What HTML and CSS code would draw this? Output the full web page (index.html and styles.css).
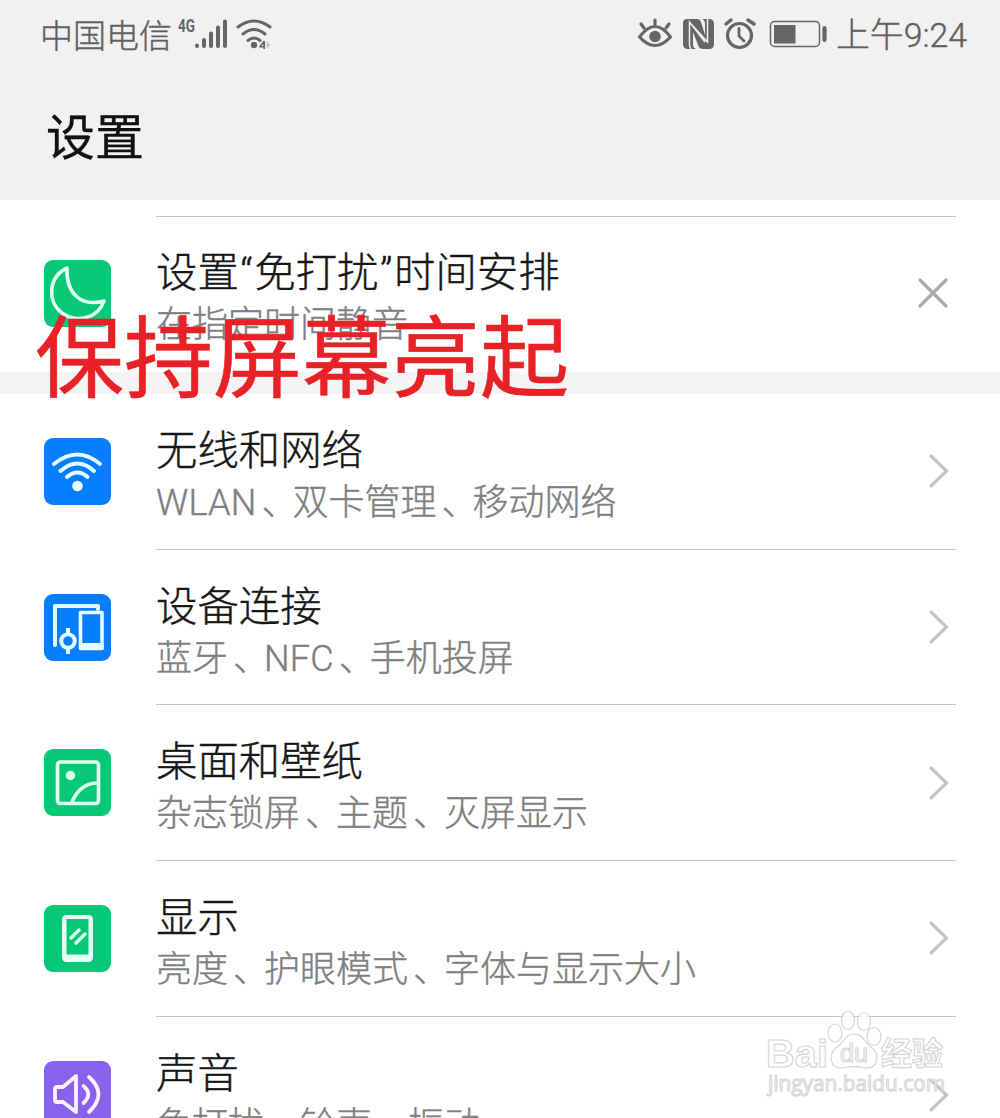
FILE: index.html
```html
<!DOCTYPE html>
<html lang="zh-CN">
<head>
<meta charset="utf-8">
<title>设置</title>
<link rel="stylesheet" href="styles.css">
</head>
<body>
<div class="screen">
  <header class="header">
    <div class="status">
      <span class="carrier">中国电信</span>
      <svg class="signal" width="98" height="36" viewBox="0 0 98 36">
        <text class="net" x="1" y="15" textLength="17" lengthAdjust="spacingAndGlyphs">4G</text>
        <g class="bars"><path d="M20 28.500v.5M27 23v6M34 16.500v12.500M41 10.500v18.500M48 4.500v24.500"/></g>
        <g class="waves"><path d="M61 10Q77-2 93 10M66 17Q77 8 88 17M71 23.500Q77 18.500 83 23.500"/></g>
        <circle cx="77" cy="28" r="3.200" fill="#666"/>
        <path d="M86.300 24v8h1.700v-8zM86.300 24l-4 5v1.500h5V29h-3l3-3z" fill="#666"/>
        <path d="M89.500 24l4 4-4 4z" fill="#c4c4c4"/>
      </svg>
      <span class="spacer"></span>
      <svg class="indicators" width="190" height="36" viewBox="0 0 190 36">
        <g fill="none" stroke="#666" stroke-width="3.200" stroke-linecap="round">
          <path d="M2.500 20Q18-1 33.500 20Q18 37 2.500 20z" stroke-linejoin="round"/>
          <path d="M18 7V3M7 11L4 7M29 11L32 7"/>
        </g>
        <circle cx="18" cy="19.500" r="5.800" fill="#666"/>
        <path d="M50 2H60Q63 2 64 5L68 18V7Q68 3 65 2H72Q77 2 77 7V27Q77 32 72 32H66Q62 32 61 28L56 15V27Q56 31 59 32H51Q46 32 46 27V6Q46 2 50 2z" fill="#666"/>
        <path d="M54 32Q52.500 30 52.500 27V5L68 25M70.500 2V25L56 9" fill="none" stroke="#f1f1f1" stroke-width="1.500"/>
        <g fill="none" stroke="#666" stroke-linecap="round">
          <circle cx="102.500" cy="18.500" r="12" stroke-width="3.200"/>
          <path d="M89 7L94 3M111 3L117 7" stroke-width="3.500"/>
          <path d="M102 11.500V19L107 24" stroke-width="2.800"/>
        </g>
        <rect x="133.500" y="4.500" width="49" height="25" rx="4" fill="none" stroke="#666" stroke-width="1.500"/>
        <rect x="137" y="8" width="21.500" height="18.500" fill="#666"/>
        <path d="M187.500 11V23" stroke="#666" stroke-width="4.200" stroke-linecap="round"/>
      </svg>
      <span class="clock">上午9:24</span>
    </div>
    <h1 class="page-title">设置</h1>
  </header>

  <main class="list">
    <section class="row suggestion">
      <svg class="icon" viewBox="0 0 67 67">
        <rect width="67" height="67" rx="9" fill="#07c876"/>
        <path d="M23 8C4 17 3 42 18 53C33 64 54 58 60 41C37 47 22 34 23 8z" fill="none" stroke="#dffff0" stroke-width="3.600" stroke-linejoin="round"/>
      </svg>
      <div class="body">
        <div class="text"><div class="title">设置<span class="quote">“</span>免打扰<span class="quote">”</span>时间安排</div><div class="sub">在指定时间静音</div></div>
        <svg class="close" viewBox="0 0 36 36"><path d="M5 5L31 31M31 5L5 31"/></svg>
      </div>
      <div class="caption">保持屏幕亮起</div>
    </section>
    <div class="band"></div>
    <section class="row">
      <svg class="icon" viewBox="0 0 67 67">
        <rect width="67" height="67" rx="9" fill="#077dff"/>
        <path d="M10 26Q33.500 7 56 26M16.500 33Q33.500 18 50 33M23 39Q33.500 30 43.500 39" fill="none" stroke="#e2fbff" stroke-width="4" stroke-linecap="round"/>
        <circle cx="33.500" cy="48" r="5.300" fill="#e9fdff"/>
      </svg>
      <div class="body">
        <div class="text"><div class="title">无线和网络</div><div class="sub"><span class="latin">WLAN</span><span class="pause">、</span>双卡管理<span class="pause">、</span>移动网络</div></div>
        <svg class="arrow" viewBox="0 0 24 38"><path d="M4 4L19.500 19L4 34"/></svg>
      </div>
    </section>
    <section class="row">
      <svg class="icon" viewBox="0 0 67 67">
        <rect width="67" height="67" rx="9" fill="#077dff"/>
        <g fill="none" stroke="#e2fbff" stroke-width="4">
          <path d="M11 51V12H54V15" stroke-linecap="round" stroke-linejoin="round"/>
          <path d="M36.500 18.500H58V54.500H36.500z" stroke-width="3.600" stroke-linejoin="round"/>
          <circle cx="24" cy="47" r="6.800"/>
          <path d="M24 34V40M24 54V60"/>
        </g>
        <path d="M35 49H59.500V54.500Q59.500 56 58 56H36.500Q35 56 35 54.500z" fill="#e2fbff"/>
      </svg>
      <div class="body">
        <div class="text"><div class="title">设备连接</div><div class="sub">蓝牙<span class="pause">、</span><span class="latin">NFC</span><span class="pause">、</span>手机投屏</div></div>
        <svg class="arrow" viewBox="0 0 24 38"><path d="M4 4L19.500 19L4 34"/></svg>
      </div>
    </section>
    <section class="row">
      <svg class="icon" viewBox="0 0 67 67">
        <rect width="67" height="67" rx="9" fill="#07c876"/>
        <g fill="none" stroke="#dcfff0" stroke-width="3.700">
          <rect x="13.500" y="13" width="41" height="41.500" rx="3"/>
          <path d="M28 53Q36 34 54 34"/>
        </g>
        <circle cx="26.500" cy="26.500" r="4.700" fill="#dcfff0"/>
      </svg>
      <div class="body">
        <div class="text"><div class="title">桌面和壁纸</div><div class="sub">杂志锁屏<span class="pause">、</span>主题<span class="pause">、</span>灭屏显示</div></div>
        <svg class="arrow" viewBox="0 0 24 38"><path d="M4 4L19.500 19L4 34"/></svg>
      </div>
    </section>
    <section class="row">
      <svg class="icon" viewBox="0 0 67 67">
        <rect width="67" height="67" rx="9" fill="#07c876"/>
        <path fill-rule="evenodd" d="M23 10H44Q49 10 49 15V52Q49 57 44 57H23Q18 57 18 52V15Q18 10 23 10zM22.500 14V49.500H44.500V14z" fill="#e8fff5"/>
        <path d="M27 33L35 25M32 38L41 29" stroke="#dcfff0" stroke-width="3.500" stroke-linecap="round"/>
      </svg>
      <div class="body">
        <div class="text"><div class="title">显示</div><div class="sub">亮度<span class="pause">、</span>护眼模式<span class="pause">、</span>字体与显示大小</div></div>
        <svg class="arrow" viewBox="0 0 24 38"><path d="M4 4L19.500 19L4 34"/></svg>
      </div>
    </section>
    <section class="row">
      <svg class="icon" viewBox="0 0 67 67">
        <rect width="67" height="67" rx="9" fill="#8662ed"/>
        <g fill="none" stroke="#fff0ff" stroke-width="3.800" stroke-linejoin="round" stroke-linecap="round">
          <path d="M11 28Q11 26 13 26H19L32 15V51L19 41H13Q11 41 11 39z"/>
          <path d="M39.500 25Q49 33 39.500 42M45 16Q64 33 45 51"/>
        </g>
      </svg>
      <div class="body">
        <div class="text"><div class="title">声音</div><div class="sub">免打扰<span class="pause">、</span>铃声<span class="pause">、</span>振动</div></div>
        <svg class="arrow" viewBox="0 0 24 38"><path d="M4 4L19.500 19L4 34"/></svg>
      </div>
    </section>
  </main>

  <svg class="watermark" width="190" height="95" viewBox="0 0 190 95">
    <g fill="#fff" fill-opacity=".85" stroke="#d6d6d6" stroke-width="1.200">
      <text class="brand" x="1" y="56.500" textLength="62" lengthAdjust="spacingAndGlyphs">Bai</text>
      <ellipse cx="70" cy="23" rx="7" ry="9"/><ellipse cx="83" cy="10.500" rx="6.500" ry="9"/>
      <ellipse cx="99" cy="11.500" rx="6.500" ry="9"/><ellipse cx="109" cy="26.500" rx="7" ry="9"/>
      <path d="M89 24C99 24 99 33 107 38C116 45 112 59 100 58C91 56 85 56 78 58C66 59 62 46 71 38C79 33 80 24 89 24z"/>
      <text class="paw-text" x="75" y="52" textLength="28" lengthAdjust="spacingAndGlyphs">du</text>
      <text class="cjk" x="116" y="54.500" textLength="62" lengthAdjust="spacingAndGlyphs">经验</text>
      <text class="site" x="3" y="81" textLength="177" lengthAdjust="spacingAndGlyphs">jingyan.baidu.com</text>
    </g>
  </svg>
</div>
</body>
</html>
```
FILE: styles.css
```css
* { box-sizing: border-box; }
body { margin: 0; background: #fff; }
.screen {
  position: relative;
  width: 1000px;
  height: 1118px;
  overflow: hidden;
  background: #fff;
  font-family: Roboto, "Noto Sans CJK SC", sans-serif;
  font-weight: 300;
}
svg { display: block; flex: none; }
.header { height: 200px; background: #f1f1f1; }
.status {
  display: flex;
  height: 70px;
  padding: 0 33px 0 40px;
  align-items: center;
  color: #606060;
  font-size: 33px;
  line-height: 70px;
  white-space: nowrap;
  -webkit-text-stroke: 0.4px #606060;
}
.status svg { -webkit-text-stroke: 0; }
.carrier { width: 137px; padding-top: 3px; }
.net { font: 700 18px Roboto, sans-serif; fill: #666; }
.bars path { fill: none; stroke: #666; stroke-width: 4; stroke-linecap: round; }
.waves path { fill: none; stroke: #666; stroke-width: 3; stroke-linecap: round; }
.spacer { flex: 1; }
.indicators { margin-right: 9px; }
.clock { padding-top: 1px; font-size: 33.800px; }
.page-title {
  margin: 39px 0 0 46px;
  color: #111;
  font-size: 49px;
  font-weight: 400;
  line-height: 60px;
  -webkit-text-stroke: 0.3px #111;
}
.row {
  position: relative;
  display: flex;
  height: 155.700px;
  padding: 0 44px 0 44px;
}
.list { padding-top: 16.300px; }
.icon { width: 67px; height: 67px; margin-top: 44px; }
.body {
  display: flex;
  flex: 1;
  margin-left: 45px;
  align-items: center;
  justify-content: space-between;
  border-bottom: 1px solid #c4c4c4;
}
.suggestion .body { border-top: 1px solid #c4c4c4; border-bottom: 0; }
.row:last-child .body { border-bottom: 0; }
.text { padding-top: 8px; white-space: nowrap; }
.suggestion .text { padding-top: 5px; }
.title { color: #171717; font-size: 41.400px; line-height: 56px; -webkit-text-stroke: 0.4px #171717; }
.quote { display: inline-block; width: 15.500px; text-align: center; font-weight: 300; }
.sub { color: #808080; font-size: 36px; line-height: 49px; -webkit-text-stroke: 0.4px #808080; }
.latin { letter-spacing: 0.200px; }
.pause { display: inline-block; width: 36px; text-indent: 5px; }
.arrow { width: 24px; height: 38px; margin-right: 5px; }
.arrow path { fill: none; stroke: #c4c4c4; stroke-width: 3.200; stroke-linecap: round; }
.close { width: 36px; height: 36px; margin: 0 5px 3px 0; }
.close path { fill: none; stroke: #aaa; stroke-width: 3.200; stroke-linecap: round; }
.band { height: 22px; background: #f4f4f4; }
.caption {
  position: absolute;
  top: 94px;
  left: 35px;
  z-index: 2;
  color: #e82127;
  font-size: 89px;
  font-weight: 400;
  line-height: 100px;
  white-space: nowrap;
  -webkit-text-stroke: 0.6px #e82127;
}
.watermark { position: absolute; left: 765px; top: 1010px; }
.brand { font: 700 39px "Liberation Sans", sans-serif; }
.paw-text { font: 400 26px "Liberation Sans", sans-serif; }
.cjk { font: 700 32px "Noto Sans CJK SC", sans-serif; }
.site { font: 400 22px "Open Sans", sans-serif; }
```
